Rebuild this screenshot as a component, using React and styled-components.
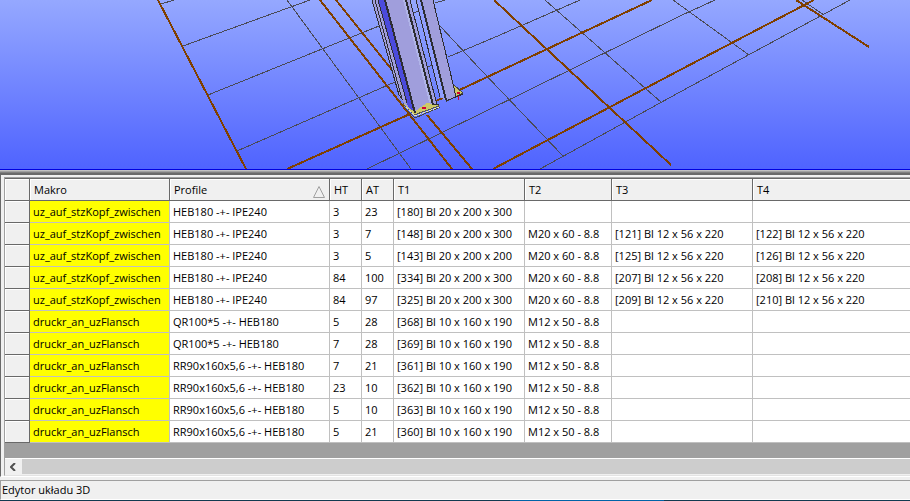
import React from 'react';
import styled, { createGlobalStyle } from 'styled-components';

const GlobalStyle = createGlobalStyle`
  * { box-sizing: border-box; }
  body {
    margin: 0;
    background: #f0f0f0;
    color: #000;
    font: 11px/16px "Open Sans", "Noto Sans", sans-serif;
  }
`

const Window = styled.div`
  display: flex;
  flex-direction: column;
  height: 100vh;
  overflow: hidden;
`

const Viewport = styled.div`
  flex: 1;
  min-height: 0;
  overflow: hidden;
  background: linear-gradient(#95a8ff, #4f63ff);
  border-bottom: 1px solid #0000e0;
`

const Scene = styled.svg`
  display: block;
  shape-rendering: crispEdges;
`

const Splitter = styled.div`
  height: 3px;
  border-top: 1px solid #c0c0c0;
  border-bottom: 1px solid #808080;
  background: #a0a0a0;
`

const Panel = styled.div`
  flex: none;
  overflow: hidden;
  padding: 2px 0 0 3px;
  border-top: 2px solid #696969;
  border-left: 1px solid #696969;
  border-bottom: 1px solid #fff;
`

const GridFrame = styled.div`
  overflow: hidden;
  border: solid #a0a0a0;
  border-width: 1px 0 0 1px;
  border-bottom: 1px solid #e3e3e3;
  background: #a0a0a0;
`

const Table = styled.table`
  table-layout: fixed;
  width: 910px;
  min-width: 100%;
  border-collapse: separate;
  border-spacing: 0;
  border-top: 1px solid #696969;
`

const HeadCell = styled.th`
  height: 22px;
  padding: 0 4px;
  text-align: left;
  font-weight: normal;
  background: #f0f0f0;
  border: solid #696969;
  border-width: 0 1px 1px 0;
  box-shadow: inset 1px 1px #fff;
`

const HeadContent = styled.div`
  display: flex;
  align-items: center;
  justify-content: space-between;
`

const SortMark = styled.svg`
  flex: none;
  margin-top: 4px;
`

const Cell = styled.td`
  height: 22px;
  padding: 0 3px;
  white-space: nowrap;
  background: ${props => props.$macro ? '#ffff00' : '#fff'};
  border: solid #c0c0c0;
  border-width: 0 1px 1px 0;
`

const RowHead = styled(HeadCell).attrs({ as: 'td' })``

const ScrollBar = styled.div`
  display: flex;
  height: 17px;
  margin-top: 15px;
  border-top: 1px solid #fff;
  border-bottom: 1px solid #f0f0f0;
  background: #f0f0f0;
`

const ScrollButton = styled.button`
  display: flex;
  align-items: center;
  justify-content: center;
  width: 17px;
  padding: 0 1px 0 0;
  border: 0;
  background: #f0f0f0;
`

const Thumb = styled.div`
  flex: 1;
  background: #cdcdcd;
`

const StatusBar = styled.footer`
  flex: none;
  height: 20px;
  margin-top: 3px;
  padding: 0 1px;
  line-height: 18px;
  border-top: 1px solid #a0a0a0;
  border-left: 1px solid #a0a0a0;
  border-bottom: 1px solid #fff;
`

const BottomEdge = styled.div`
  flex: none;
  height: 1px;
  background: linear-gradient(90deg, #123a50 56%, #0063a8 56% 73%, #123a50 73%);
`

const columns = [
  { name: 'Makro', width: 140 },
  { name: 'Profile', width: 160, sorted: true },
  { name: 'HT', width: 32 },
  { name: 'AT', width: 32 },
  { name: 'T1', width: 131 },
  { name: 'T2', width: 87 },
  { name: 'T3', width: 141 },
  { name: 'T4' },
]

const uz = 'uz_auf_stzKopf_zwischen'
const druckr = 'druckr_an_uzFlansch'
const ipe = 'HEB180 -+- IPE240'
const qr = 'QR100*5 -+- HEB180'
const rr = 'RR90x160x5,6 -+- HEB180'
const m20 = 'M20 x 60 - 8.8'
const m12 = 'M12 x 50 - 8.8'

const rows = [
  [uz, ipe, 3, 23, '[180] Bl 20 x 200 x 300', '', '', ''],
  [uz, ipe, 3, 7, '[148] Bl 20 x 200 x 300', m20, '[121] Bl 12 x 56 x 220', '[122] Bl 12 x 56 x 220'],
  [uz, ipe, 3, 5, '[143] Bl 20 x 200 x 200', m20, '[125] Bl 12 x 56 x 220', '[126] Bl 12 x 56 x 220'],
  [uz, ipe, 84, 100, '[334] Bl 20 x 200 x 300', m20, '[207] Bl 12 x 56 x 220', '[208] Bl 12 x 56 x 220'],
  [uz, ipe, 84, 97, '[325] Bl 20 x 200 x 300', m20, '[209] Bl 12 x 56 x 220', '[210] Bl 12 x 56 x 220'],
  [druckr, qr, 5, 28, '[368] Bl 10 x 160 x 190', m12, '', ''],
  [druckr, qr, 7, 28, '[369] Bl 10 x 160 x 190', m12, '', ''],
  [druckr, rr, 7, 21, '[361] Bl 10 x 160 x 190', m12, '', ''],
  [druckr, rr, 23, 10, '[362] Bl 10 x 160 x 190', m12, '', ''],
  [druckr, rr, 5, 10, '[363] Bl 10 x 160 x 190', m12, '', ''],
  [druckr, rr, 5, 21, '[360] Bl 10 x 160 x 190', m12, '', ''],
]

const Model = () => (
  <Scene width="910" height="169" viewBox="0 0 910 169" aria-hidden="true">
    <g fill="none" stroke="#4a4a55" strokeWidth="1">
      <path d="M161 4L174 0M183 46L310 0M208 95L379 26M237 151L395 82M367 169L480 114L680 16L715 0" />
      <path d="M287 0L411 169M411 14L418 11M425 68L432 65M435 3L445 0M448 57L500 35L580 0" />
      <path d="M440 26L480 69L563 156M545 0L662 103M673 0L749 55M802 0L824 15M540 169L680 92L850 0" />
    </g>
    <g fill="none" stroke="#804000" strokeWidth="2">
      <path d="M158 0L246 169M287 169L410 114M436 101L500 71L652 0" />
      <path d="M320 0L452 169M336 0L392 70M427 115L472 169" />
      <path d="M494 0L671 165M493 169L680 70L814 0M796 0L869 47" />
    </g>
    {/* base plates */}
    <path d="M403 104L414 115L439 106L433 101Z" fill="#cdc966" stroke="#555" />
    <path d="M405 108L415 118L440 107" fill="none" stroke="#444" />
    <path d="M406 107L415 116L439 107" fill="none" stroke="#eee9ad" strokeDasharray="3 1" />
    <path d="M454 85L463 93L447 101Z" fill="#cdc966" stroke="#444" />
    {/* rear column */}
    <path d="M416 0L433 0L454 88L456 97L447 101L440 97Z" fill="#a09edc" />
    <path d="M417 0L421 0L445 99L440 96Z" fill="#8f9eff" />
    <path d="M416 0L440 97M433 0L454 88L456 97M446 101L463 94" fill="none" stroke="#2d2d32" />
    <path d="M421 0L446 100" fill="none" stroke="#2d2d32" strokeWidth="2" />
    {/* front column */}
    <path d="M372 0L379 0L410 110L399 97Z" fill="#a09edc" />
    <path d="M384 0L410 0L437 105L427 103L414 112Z" fill="#a09edc" />
    <path d="M403 0L405 0L432 103L429 102Z" fill="#b0b4e8" />
    <path d="M378 0L385 0L415 112L408 107Z" fill="#4b4bdc" />
    <path d="M372 0L399 95L403 100M375 0L402 99" fill="none" stroke="#2d2d32" />
    <path d="M385 0L415 113M406 0L433 105" fill="none" stroke="#2d2d32" strokeWidth="2" />
    <path d="M378 0L407 103M410 0L437 105M433 105L439 104" fill="none" stroke="#2d2d32" />
    <path d="M422 107h4v2h-4zM457 92h3v2h-3z" fill="#d20032" />
    <path d="M458 96v4" fill="none" stroke="#d20032" />
  </Scene>
)

const App = () => {
  return (
    <Window>
      <GlobalStyle />
      <Viewport>
        <Model />
      </Viewport>
      <Splitter />
      <Panel>
        <GridFrame>
          <Table>
            <colgroup>
              <col style={{ width: 25 }} />
              {columns.map(col => <col key={col.name} style={{ width: col.width }} />)}
            </colgroup>
            <thead>
              <tr>
                <HeadCell />
                {columns.map(col => (
                  <HeadCell key={col.name}>
                    <HeadContent>
                      {col.name}
                      {col.sorted && (
                        <SortMark width="12" height="12" viewBox="0 0 12 12" fill="none" stroke="#a0a0a0">
                          <path d="M6 .5L.5 11.5h11z" />
                        </SortMark>
                      )}
                    </HeadContent>
                  </HeadCell>
                ))}
              </tr>
            </thead>
            <tbody>
              {rows.map((row, i) => (
                <tr key={i}>
                  <RowHead />
                  {row.map((value, j) => <Cell key={j} $macro={j === 0}>{value}</Cell>)}
                </tr>
              ))}
            </tbody>
          </Table>
          <ScrollBar>
            <ScrollButton aria-label="Scroll left">
              <svg width="6" height="8" viewBox="0 0 6 8" fill="none" stroke="#505050" strokeWidth="2">
                <path d="M5 0L1 4L5 8" />
              </svg>
            </ScrollButton>
            <Thumb />
          </ScrollBar>
        </GridFrame>
      </Panel>
      <StatusBar>Edytor układu 3D</StatusBar>
      <BottomEdge />
    </Window>
  )
}

export default App;
